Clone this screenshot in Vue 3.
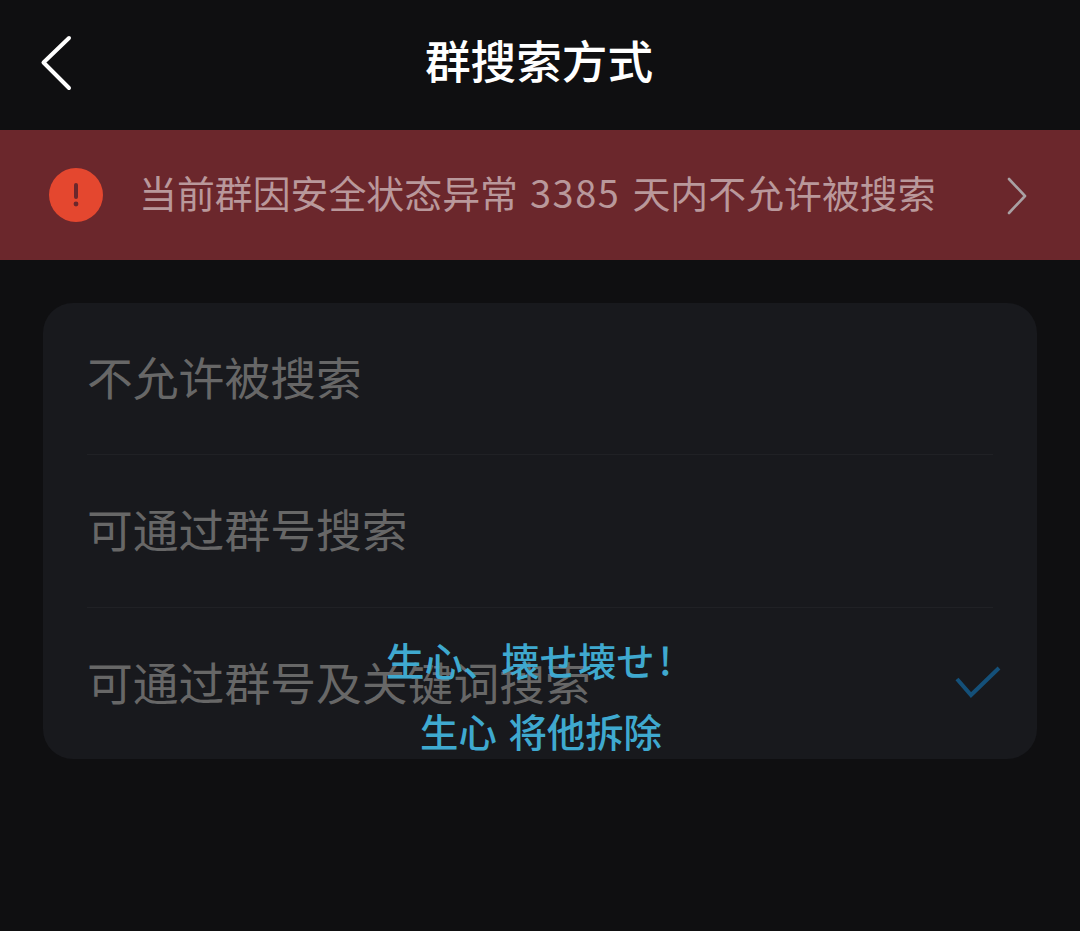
<template>
  <div class="page">
    <header class="topbar">
      <button class="back" aria-label="返回">
        <svg width="34" height="58" viewBox="0 0 34 58">
          <path d="M29 3 L3.5 27.5 L29 53" fill="none" stroke="#fff" stroke-width="4" stroke-linecap="round" stroke-linejoin="round" />
        </svg>
      </button>
      <h1 class="title">群搜索方式</h1>
    </header>

    <div class="notice">
      <svg class="notice-icon" width="54" height="54" viewBox="0 0 54 54">
        <circle cx="27" cy="27" r="27" fill="#e4472f" />
        <rect x="25" y="15" width="4" height="16" rx="2" fill="#6b272c" />
        <circle cx="27" cy="36" r="2.4" fill="#6b272c" />
      </svg>
      <span class="notice-text">当前群因安全状态异常 <span class="num">3385</span> 天内不允许被搜索</span>
      <svg class="notice-arrow" width="22" height="38" viewBox="0 0 22 38">
        <path d="M3 2 L19 19 L3 36" fill="none" stroke="#a9a0a3" stroke-width="2.6" stroke-linecap="round" stroke-linejoin="round" />
      </svg>
    </div>

    <section class="card">
      <div v-for="opt in options" :key="opt.label" class="row">
        <span>{{ opt.label }}</span>
        <svg v-if="opt.checked" class="check" width="46" height="34" viewBox="0 0 46 34">
          <path d="M2 14 L16 30 L44 3" fill="none" stroke="#145079" stroke-width="4" />
        </svg>
      </div>
    </section>

    <div class="toast">
      <div class="toast-line first">生心、壊せ壊せ<span class="bang">!</span></div>
      <div class="toast-line second">生心 将他拆除</div>
    </div>
  </div>
</template>

<script setup>
const options = [
  { label: "不允许被搜索", checked: false },
  { label: "可通过群号搜索", checked: false },
  { label: "可通过群号及关键词搜索", checked: true },
];
</script>

<style>
html,
body {
  margin: 0;
  background: #0f0f11;
}
</style>

<style scoped>
.page {
  position: relative;
  width: 1080px;
  height: 931px;
  overflow: hidden;
  background: #0f0f11;
  font-family: "Noto Sans CJK SC", "Noto Sans", sans-serif;
}

.topbar {
  height: 130px;
  display: flex;
  align-items: center;
  justify-content: center;
  position: relative;
}

.back {
  position: absolute;
  left: 40px;
  top: 35px;
  padding: 0;
  border: 0;
  background: none;
  display: flex;
}

.title {
  margin: 0 2px 12px 0;
  font-size: 45.6px;
  font-weight: 500;
  color: #fff;
  line-height: 60px;
}

.notice {
  height: 130px;
  display: flex;
  align-items: center;
  padding: 0 52px 0 49px;
  background: #6b272c;
}

.notice-icon {
  flex: none;
}

.notice-text {
  flex: 1;
  margin: 0 0 8px 36px;
  font-size: 37.9px;
  color: #b9989b;
  white-space: nowrap;
  word-spacing: 3.5px;
}

.num {
  letter-spacing: 1.6px;
}

.notice-arrow {
  flex: none;
  margin-top: 2px;
}

.card {
  margin: 43px 43px 0;
  height: 456px;
  border-radius: 30px;
  background: #18191d;
  padding: 0 44px;
}

.row {
  height: 152px;
  box-sizing: border-box;
  display: flex;
  align-items: center;
  justify-content: space-between;
  padding-bottom: 6px;
  font-size: 45.8px;
  color: #676767;
  border-bottom: 1px solid #202125;
  white-space: nowrap;
}

.row:nth-child(2) {
  height: 153px;
}

.row:last-child {
  border-bottom: 0;
}

.check {
  margin-right: -8px;
  margin-top: 2px;
}

/* toast sits on top of the last row */
.toast {
  position: absolute;
  left: 0;
  top: 624px;
  width: 1080px;
  color: #3fa9cf;
  font-size: 38.4px;
  font-weight: 500;
  line-height: 71px;
}

.toast-line {
  white-space: nowrap;
  position: absolute;
}

.first {
  left: 386px;
  top: 0;
}

.bang {
  margin-left: 4px;
}

.second {
  left: 420px;
  top: 71px;
  word-spacing: 3px;
}
</style>
